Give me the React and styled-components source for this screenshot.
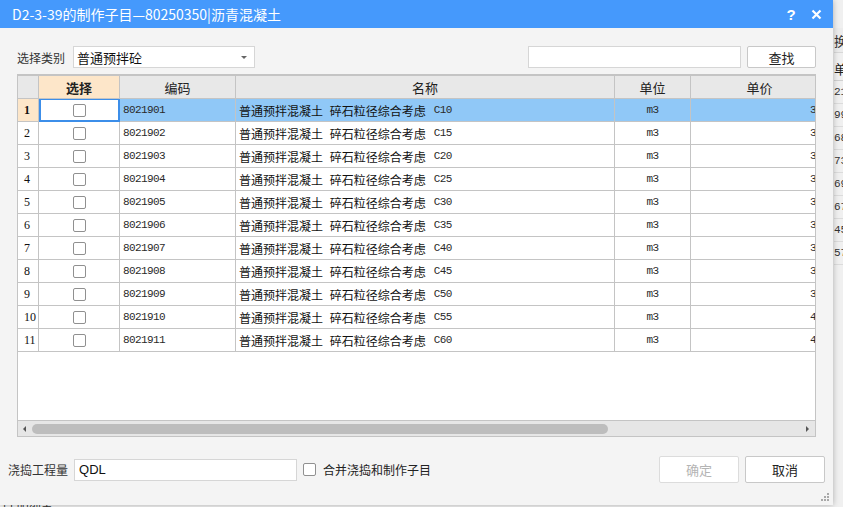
import React from "react";
import styled, { createGlobalStyle, css } from "styled-components";

const Global = createGlobalStyle`
  html, body { margin: 0; padding: 0; }
  body {
    width: 843px; height: 507px; overflow: hidden;
    font-family: "Noto Sans CJK SC", "Noto Sans", sans-serif;
    background: #f0f0f0;
  }
`;

const CJK = `"Noto Sans CJK SC", "Noto Sans", sans-serif`;
const MONO = `"Liberation Mono", "DejaVu Sans Mono", monospace`;

const Desktop = styled.div`
  position: relative;
  width: 843px;
  height: 507px;
  overflow: hidden;
  background: #f0f0f0;
`;

/* background application visible behind the dialog */
const BgApp = styled.div`
  display: flex;
  flex-direction: column;
  height: 507px;
`;
const BgStrip = styled.div`
  display: flex;
  flex-direction: column;
  padding-left: 834px;
  padding-top: 28px;
  width: 843px;
  box-sizing: border-box;
  overflow: hidden;
`;
const BgToolRow = styled.div`
  height: 24px;
  display: flex;
  align-items: center;
  font: 13px ${CJK};
  color: #333;
  background: #ececec;
  border-bottom: 1px solid #d8d8d8;
  white-space: nowrap;
`;
const BgHead = styled.div`
  height: 24px;
  margin-top: 3px;
  display: flex;
  align-items: center;
  font: 13px ${CJK};
  color: #222;
  border-bottom: 1px solid #d0d0d0;
  white-space: nowrap;
`;
const BgCell = styled.div`
  height: 22px;
  display: flex;
  align-items: center;
  font: 11px ${MONO};
  color: #333;
  border-bottom: 1px solid #dcdcdc;
  white-space: nowrap;
`;
const BgFooter = styled.div`
  margin-top: auto;
  height: 4px;
  overflow: visible;
  padding-left: 2px;
  font: 12px ${CJK};
  color: #333;
  line-height: 1;
  white-space: nowrap;
`;

/* dialog window */
const Dialog = styled.div`
  position: absolute;
  left: 0;
  top: 0;
  width: 833px;
  height: 505px;
  background: #f4f4f4;
  box-shadow: 0 0 6px rgba(0, 0, 0, 0.28);
  display: flex;
  flex-direction: column;
`;

const TitleBar = styled.div`
  height: 28px;
  flex: none;
  background: #4599fc;
  display: flex;
  align-items: center;
  padding: 0 9px 0 12px;
  color: #fff;
`;
const Title = styled.div`
  font: 14px ${CJK};
  white-space: nowrap;
  flex: 1;
`;
const TitleBtn = styled.div`
  width: 16px;
  height: 16px;
  display: flex;
  align-items: center;
  justify-content: center;
  font: bold 15px "Liberation Sans", Arial, sans-serif;
  color: #fff;
  margin-left: ${(p) => p.$gap || 0}px;
`;

const Body = styled.div`
  flex: 1;
  display: flex;
  flex-direction: column;
  padding: 18px 17px 0 17px;
  position: relative;
`;

const TopRow = styled.div`
  display: flex;
  align-items: center;
  height: 22px;
`;
const Label = styled.span`
  font: 12px ${CJK};
  color: #333;
  white-space: nowrap;
`;
const Select = styled.div`
  margin-left: 8px;
  width: 182px;
  height: 22px;
  box-sizing: border-box;
  background: #fff;
  border: 1px solid #d6d6d6;
  display: flex;
  align-items: center;
  padding-left: 3px;
  font: 13px ${CJK};
  color: #111;
  position: relative;
  &::after {
    content: "";
    position: absolute;
    right: 7px;
    top: 9px;
    border-left: 3px solid transparent;
    border-right: 3px solid transparent;
    border-top: 3px solid #666;
  }
`;
const Spacer = styled.div`
  flex: 1;
`;
const TextInput = styled.div`
  width: ${(p) => p.$w}px;
  height: 22px;
  box-sizing: border-box;
  background: #fff;
  border: 1px solid #d6d6d6;
  display: flex;
  align-items: center;
  padding-left: 4px;
  margin-left: ${(p) => p.$ml || 0}px;
  font: 13px "Liberation Sans", Arial, sans-serif;
  color: #111;
`;
const Button = styled.div`
  width: ${(p) => p.$w}px;
  height: ${(p) => p.$h}px;
  box-sizing: border-box;
  margin-left: 6px;
  background: #fff;
  border: 1px solid ${(p) => (p.$disabled ? "#dcdcdc" : "#c8c8c8")};
  border-radius: 2px;
  display: flex;
  align-items: center;
  justify-content: center;
  font: 13px ${CJK};
  color: ${(p) => (p.$disabled ? "#b4b4b4" : "#222")};
`;

/* grid */
const GridFrame = styled.div`
  margin-top: 6px;
  width: 799px;
  height: 363px;
  box-sizing: border-box;
  border: 1px solid #c4c4c4;
  border-top: 2px solid #c4c4c4;
  background: #fff;
  display: flex;
  flex-direction: column;
  overflow: hidden;
`;
const Viewport = styled.div`
  flex: 1;
  overflow: hidden;
`;
const COLS = "21px 81px 116px 379px 76px 160px";
const Row = styled.div`
  display: grid;
  grid-template-columns: ${COLS};
  height: 23px;
  width: 833px;
`;
const HeadCell = styled.div`
  box-sizing: border-box;
  border-right: 1px solid #c4c4c4;
  border-bottom: 1px solid #c4c4c4;
  background: ${(p) => (p.$active ? "#fde6c9" : "#e8e8e8")};
  display: flex;
  align-items: center;
  justify-content: center;
  font: ${(p) => (p.$active ? "bold" : "normal")} 13px ${CJK};
  color: #222;
  padding-right: ${(p) => p.$pr || 0}px;
`;
const Cell = styled.div`
  box-sizing: border-box;
  border-right: 1px solid #c4c4c4;
  border-bottom: 1px solid #c4c4c4;
  background: ${(p) => (p.$sel ? "#90c8f7" : "#fff")};
  display: flex;
  align-items: center;
  overflow: hidden;
  white-space: nowrap;
  color: #111;
  ${(p) =>
    p.$align === "center" &&
    css`
      justify-content: center;
    `}
  ${(p) =>
    p.$align === "right" &&
    css`
      justify-content: flex-end;
      padding-right: 4px;
    `}
  ${(p) =>
    p.$align === "left" &&
    css`
      padding-left: 3px;
    `}
`;
const NumCell = styled(Cell)`
  padding-left: 6px;
  font: ${(p) => (p.$cur ? "bold" : "normal")} 12px "Liberation Serif", "Times New Roman", serif;
  background: ${(p) => (p.$cur ? "#fde6c9" : "#fff")};
`;
const CheckCell = styled(Cell)`
  justify-content: center;
  ${(p) =>
    p.$focus &&
    css`
      border: 2px solid #3c8ee9;
      border-top-width: 1px;
    `}
`;
const Box = styled.div`
  width: 13px;
  height: 13px;
  flex: none;
  box-sizing: border-box;
  border: 1px solid #909090;
  border-radius: 2px;
  background: #fff;
  margin-left: ${(p) => p.$ml || 0}px;
`;
const Mono = styled.span`
  font: 11px ${MONO};
  letter-spacing: -0.6px;
  color: #2a2a2a;
  margin-left: ${(p) => p.$ml || 0}px;
`;
const Name = styled.span`
  font: 12px ${CJK};
  word-spacing: 4px;
`;

const HScroll = styled.div`
  height: 15px;
  flex: none;
  background: #e6e6e6;
  border-top: 1px solid #c4c4c4;
  display: flex;
  align-items: center;
  padding: 0 6px 0 5px;
`;
const Arrow = styled.div`
  width: 0;
  height: 0;
  border-top: 3.5px solid transparent;
  border-bottom: 3.5px solid transparent;
  ${(p) =>
    p.$dir === "left"
      ? css`
          border-right: 3px solid #555;
        `
      : css`
          border-left: 3px solid #555;
        `}
`;
const Thumb = styled.div`
  margin-left: 6px;
  width: 576px;
  height: 10px;
  border-radius: 5px;
  background: #bdbdbd;
`;

const BottomRow = styled.div`
  display: flex;
  align-items: center;
  margin: 19px -9px 0 -9px;
  height: 27px;
`;
const CheckLabel = styled.span`
  margin-left: 7px;
  font: 12px ${CJK};
  color: #222;
  white-space: nowrap;
`;
const Grip = styled.svg`
  position: absolute;
  right: 3px;
  bottom: 3px;
`;

const rows = [
  ["8021901", "C10", "309.71"],
  ["8021902", "C15", "318.45"],
  ["8021903", "C20", "327.80"],
  ["8021904", "C25", "336.24"],
  ["8021905", "C30", "345.62"],
  ["8021906", "C35", "354.10"],
  ["8021907", "C40", "363.58"],
  ["8021908", "C45", "372.95"],
  ["8021909", "C50", "389.30"],
  ["8021910", "C55", "401.67"],
  ["8021911", "C60", "418.22"],
];

const bgNums = ["21", "99", "68", "73", "69", "67", "45", "57"];

export default function App() {
  return (
    <Desktop>
      <Global />
      <BgApp>
        <BgStrip>
          <BgToolRow>换</BgToolRow>
          <BgHead>单</BgHead>
          {bgNums.map((n) => (
            <BgCell key={n}>{n}</BgCell>
          ))}
        </BgStrip>
        <BgFooter>日 明细表</BgFooter>
      </BgApp>

      <Dialog>
        <TitleBar>
          <Title>D2-3-39的制作子目—80250350|沥青混凝土</Title>
          <TitleBtn>?</TitleBtn>
          <TitleBtn $gap={9}>
            <svg width="11" height="11" viewBox="0 0 11 11">
              <path d="M1.5 1.5 L9.5 9.5 M9.5 1.5 L1.5 9.5" stroke="#fff" strokeWidth="2.2" />
            </svg>
          </TitleBtn>
        </TitleBar>
        <Body>
          <TopRow>
            <Label>选择类别</Label>
            <Select>普通预拌砼</Select>
            <Spacer />
            <TextInput $w={213} />
            <Button $w={69} $h={22}>查找</Button>
          </TopRow>

          <GridFrame>
            <Viewport>
              <Row>
                <HeadCell />
                <HeadCell $active>选择</HeadCell>
                <HeadCell>编码</HeadCell>
                <HeadCell>名称</HeadCell>
                <HeadCell>单位</HeadCell>
                <HeadCell $pr={22}>单价</HeadCell>
              </Row>
              {rows.map(([code, grade, price], i) => {
                const sel = i === 0;
                return (
                  <Row key={code}>
                    <NumCell $cur={sel}>{i + 1}</NumCell>
                    <CheckCell $focus={sel}>
                      <Box />
                    </CheckCell>
                    <Cell $sel={sel} $align="left">
                      <Mono>{code}</Mono>
                    </Cell>
                    <Cell $sel={sel} $align="left">
                      <Name>普通预拌混凝土 碎石粒径综合考虑</Name>
                      <Mono $ml={8}>{grade}</Mono>
                    </Cell>
                    <Cell $sel={sel} $align="center">
                      <Mono>m3</Mono>
                    </Cell>
                    <Cell $sel={sel} $align="right">
                      <Mono>{price}</Mono>
                    </Cell>
                  </Row>
                );
              })}
            </Viewport>
            <HScroll>
              <Arrow $dir="left" />
              <Thumb />
              <Spacer />
              <Arrow $dir="right" />
            </HScroll>
          </GridFrame>

          <BottomRow>
            <Label>浇捣工程量</Label>
            <TextInput $w={223} $ml={6}>QDL</TextInput>
            <Box $ml={6} />
            <CheckLabel>合并浇捣和制作子目</CheckLabel>
            <Spacer />
            <Button $w={80} $h={27} $disabled>确定</Button>
            <Button $w={80} $h={27}>取消</Button>
          </BottomRow>

          <Grip width="9" height="9" viewBox="0 0 9 9">
            <g fill="#a8a8a8">
              <rect x="6" y="0" width="2" height="2" />
              <rect x="3" y="3" width="2" height="2" />
              <rect x="6" y="3" width="2" height="2" />
              <rect x="0" y="6" width="2" height="2" />
              <rect x="3" y="6" width="2" height="2" />
              <rect x="6" y="6" width="2" height="2" />
            </g>
          </Grip>
        </Body>
      </Dialog>
    </Desktop>
  );
}
